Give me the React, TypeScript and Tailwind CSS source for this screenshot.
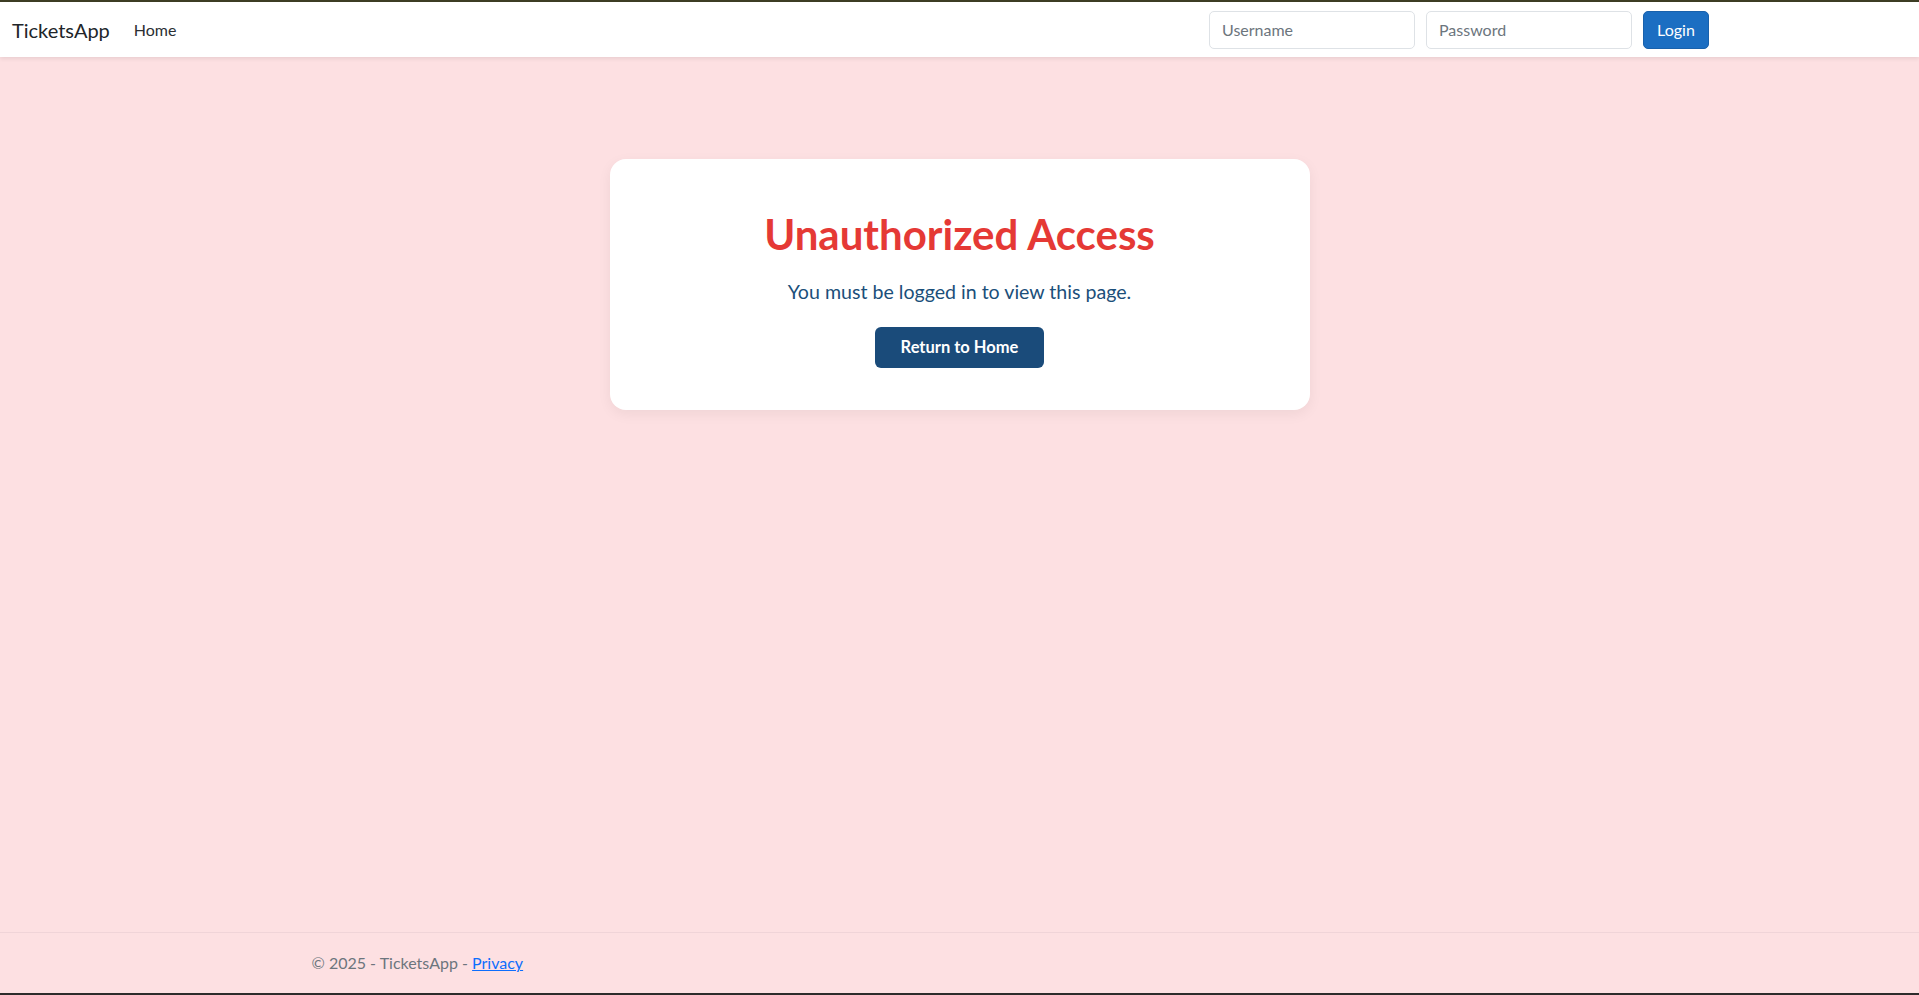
import React from 'react';

const font = { fontFamily: 'Lato, "Open Sans", sans-serif' };

function Navbar() {
  return (
    <nav className="h-[55px] bg-white flex items-center px-3 shadow-[0_2px_4px_rgba(0,0,0,0.08)] relative z-10">
      <a href="#" className="text-[20px] text-[#212529] mr-4">
        TicketsApp
      </a>
      <a href="#" className="px-2 text-[16px] text-[#2b2f33]">
        Home
      </a>

      {/* Login form */}
      <form className="ml-auto mr-[198px] flex items-center gap-[11px]">
        <input
          type="text"
          placeholder="Username"
          className="w-[206px] h-[38px] px-3 text-[16px] border border-[#dee2e6] rounded-[5px] placeholder:text-[#6c757d] outline-none"
        />
        <input
          type="password"
          placeholder="Password"
          className="w-[206px] h-[38px] px-3 text-[16px] border border-[#dee2e6] rounded-[5px] placeholder:text-[#6c757d] outline-none"
        />
        <button
          type="button"
          className="w-[66px] h-[38px] bg-[#1b6ec2] text-white text-[16px] rounded-[5px] border border-[#1861ac]"
        >
          Login
        </button>
      </form>
    </nav>
  );
}

export default function App() {
  return (
    <div className="min-h-screen flex flex-col bg-[#fde0e2]" style={font}>
      <div className="h-[2px] bg-[#3d3d24]" />
      <Navbar />

      {/* Main */}
      <main className="flex-1">
        <div className="w-[700px] mx-auto mt-[102px] bg-white rounded-[16px] shadow-[0_4px_14px_rgba(0,0,0,0.06)] px-10 pt-[51px] pb-[42px] flex flex-col items-center">
          <h1 className="text-[42px] leading-[48px] font-bold text-[#e53935]">Unauthorized Access</h1>
          <p className="mt-[19px] text-[19.6px] leading-[29px] text-[#1b4f7a]">
            You must be logged in to view this page.
          </p>
          <button
            type="button"
            className="mt-[21px] w-[169px] h-[41px] bg-[#1a4b7a] text-white font-bold text-[16.5px] rounded-[6px]"
          >
            Return to Home
          </button>
        </div>
      </main>

      {/* Footer */}
      <footer className="h-[61px] border-t border-[#f0d4d8] text-[#6c757d] text-[16px]">
        <div className="w-[1320px] mx-auto px-3 leading-[60px]">
          © 2025 - TicketsApp -{' '}
          <a href="#" className="text-[#0d6efd] underline">
            Privacy
          </a>
        </div>
      </footer>
      <div className="h-[2px] bg-[#2d2b2b]" />
    </div>
  );
}
